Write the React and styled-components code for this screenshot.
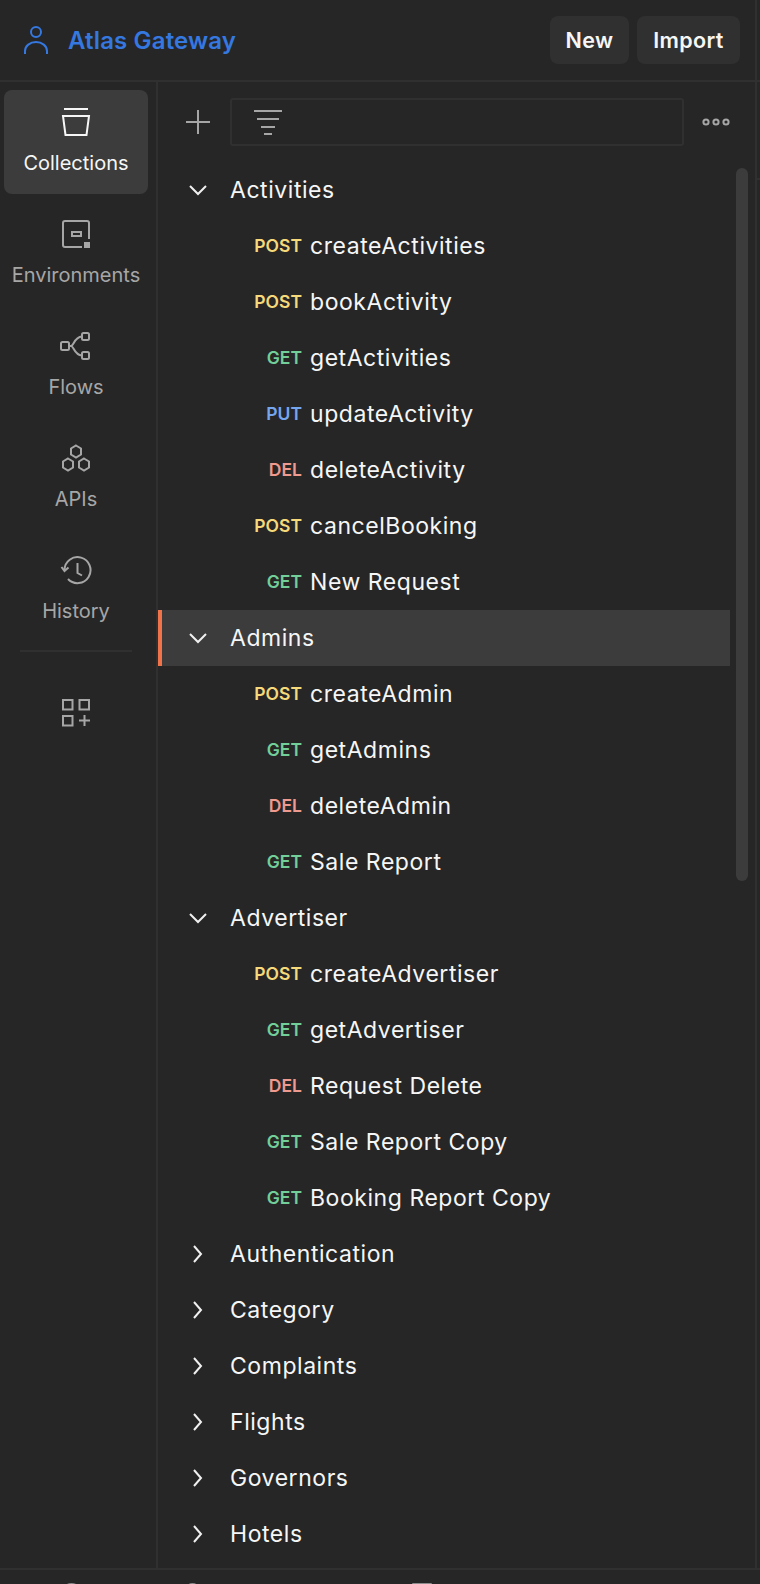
import React from "react";
import styled, { createGlobalStyle } from "styled-components";

const Global = createGlobalStyle`
  html, body { margin: 0; padding: 0; background: #262626; }
  body { font-family: Inter, "Liberation Sans", sans-serif; -webkit-font-smoothing: antialiased; }
`;

const Page = styled.div`
  position: relative;
  width: 760px;
  height: 1584px;
  overflow: hidden;
  background: #262626;
  display: flex;
  flex-direction: column;
`;

const Header = styled.header`
  height: 82px;
  flex: none;
  box-sizing: border-box;
  border-bottom: 2px solid #303030;
  padding: 16px 20px 0 24px;
  display: flex;
  justify-content: space-between;
  align-items: flex-start;
`;

const Workspace = styled.div`
  display: flex;
  align-items: center;
  gap: 20px;
  height: 48px;
`;

const WorkspaceName = styled.span`
  color: #3478e0;
  font-size: 24px;
  font-weight: 600;
  letter-spacing: 0.15px;
`;

const Actions = styled.div`
  display: flex;
  gap: 8px;
`;

const HeaderButton = styled.button`
  height: 48px;
  width: ${(p) => p.$width}px;
  border: 0;
  padding: 0;
  border-radius: 8px;
  background: #303030;
  color: #f6f6f6;
  font: 600 21.5px Inter, sans-serif;
  letter-spacing: 0.4px;
`;

const Body = styled.div`
  height: 1488px;
  flex: none;
  display: flex;
  border-bottom: 2px solid #303030;
  box-sizing: border-box;
`;

const Rail = styled.nav`
  width: 158px;
  flex: none;
  box-sizing: border-box;
  border-right: 2px solid #303030;
  padding: 8px 8px 0 4px;
  display: flex;
  flex-direction: column;
  align-items: stretch;
`;

const RailItem = styled.div`
  height: 104px;
  margin-bottom: 8px;
  border-radius: 8px;
  background: ${(p) => (p.$active ? "#3c3c3c" : "transparent")};
  color: ${(p) => (p.$active ? "#f6f6f6" : "#a6a6a6")};
  display: flex;
  flex-direction: column;
  align-items: center;
  padding-top: 16px;
  box-sizing: border-box;
  font-size: 20px;
  line-height: 28px;
  gap: 11px;
  white-space: nowrap;
`;

const RailIcon = styled.svg`
  width: 32px;
  height: 32px;
  fill: none;
  stroke: currentColor;
  stroke-width: 2;
  flex: none;
`;

const RailDivider = styled.div`
  height: 2px;
  background: #303030;
  margin: 0 16px 44px;
`;

const AddWrap = styled.div`
  display: flex;
  justify-content: center;
  color: #a6a6a6;
`;

const Panel = styled.main`
  flex: 1;
  position: relative;
  min-width: 0;
`;

const Toolbar = styled.div`
  height: 80px;
  box-sizing: border-box;
  padding: 16px 0 0 24px;
  display: flex;
  align-items: flex-start;
`;

const ToolIcon = styled.svg`
  width: 32px;
  height: 48px;
  flex: none;
  fill: none;
  stroke: #a6a6a6;
  stroke-width: 2;
`;

const Search = styled.div`
  width: 454px;
  height: 48px;
  box-sizing: border-box;
  margin-left: 16px;
  border: 2px solid #303030;
  border-radius: 3px;
  padding-left: 22px;
  display: flex;
  align-items: center;
`;

const More = styled.svg`
  width: 32px;
  height: 48px;
  margin-left: 16px;
  fill: none;
  stroke: #a6a6a6;
  stroke-width: 2;
`;

const Tree = styled.div`
  width: 572px;
`;

const FolderRow = styled.div`
  height: 56px;
  box-sizing: border-box;
  display: flex;
  align-items: center;
  padding-left: ${(p) => (p.$selected ? 26 : 30)}px;
  border-left: ${(p) => (p.$selected ? "4px solid #f0734a" : "0")};
  background: ${(p) => (p.$selected ? "#3c3c3c" : "transparent")};
  color: #f6f6f6;
  font-size: 23px;
  letter-spacing: 0.55px;
  gap: 22px;
`;

const Chevron = styled.svg`
  width: 20px;
  height: 20px;
  flex: none;
  fill: none;
  stroke: #f0f0f0;
  stroke-width: 2;
`;

const RequestRow = styled.div`
  height: 56px;
  display: flex;
  align-items: center;
  color: #f6f6f6;
  font-size: 23px;
  letter-spacing: 0.55px;
`;

const Method = styled.span`
  width: 144px;
  flex: none;
  text-align: right;
  margin-right: 8px;
  padding-bottom: 2px;
  font-size: 17.5px;
  font-weight: 600;
  letter-spacing: 0;
  color: ${(p) => p.$color};
`;

const Thumb = styled.div`
  position: absolute;
  left: 578px;
  top: 86px;
  width: 12px;
  height: 713px;
  border-radius: 6px;
  background: #3c3c3c;
`;

const RightEdge = styled.div`
  position: absolute;
  left: 755px;
  top: 0;
  height: 1568px;
  width: 2px;
  background: #303030;
`;

const EdgeTick = styled.div`
  position: absolute;
  left: 757px;
  top: 178px;
  width: 3px;
  height: 2px;
  background: #303030;
`;

const FooterPeek = styled.div`
  flex: 1;
  position: relative;
`;

const PeekIcon = styled.span`
  position: absolute;
  top: 13px;
  left: ${(p) => p.$left}px;
  width: ${(p) => p.$size}px;
  height: 6px;
  border-radius: ${(p) => (p.$square ? "1px 1px 0 0" : "50% 50% 0 0")};
  background: #8c8c8c;
`;

const COLORS = { POST: "#f5d97a", GET: "#72cf9a", PUT: "#74a6f0", DEL: "#ee9a8e" };

const tree = [
  { name: "Activities", open: true, items: [["POST", "createActivities"], ["POST", "bookActivity"], ["GET", "getActivities"], ["PUT", "updateActivity"], ["DEL", "deleteActivity"], ["POST", "cancelBooking"], ["GET", "New Request"]] },
  { name: "Admins", open: true, selected: true, items: [["POST", "createAdmin"], ["GET", "getAdmins"], ["DEL", "deleteAdmin"], ["GET", "Sale Report"]] },
  { name: "Advertiser", open: true, items: [["POST", "createAdvertiser"], ["GET", "getAdvertiser"], ["DEL", "Request Delete"], ["GET", "Sale Report Copy"], ["GET", "Booking Report Copy"]] },
  { name: "Authentication" },
  { name: "Category" },
  { name: "Complaints" },
  { name: "Flights" },
  { name: "Governors" },
  { name: "Hotels" },
];

const rail = [
  { label: "Collections", active: true, icon: <><path d="M4 3H28" /><path d="M3 10H29L26.5 29H5.5Z" /></> },
  { label: "Environments", icon: <><path d="M22 29H5a2 2 0 0 1-2-2V5a2 2 0 0 1 2-2h22a2 2 0 0 1 2 2v16" /><rect x="12" y="14" width="9" height="4" /><rect x="24" y="24" width="6" height="6" fill="currentColor" stroke="none" /></> },
  { label: "Flows", icon: <><rect x="1" y="12" width="8" height="8" rx="1.5" /><rect x="22" y="3" width="7" height="7" rx="1.5" /><rect x="22" y="22" width="7" height="7" rx="1.5" /><path d="M9 16h2c3 0 3-9 11-9.5M11 16c3 0 3 9 11 9.5" /></> },
  { label: "APIs", icon: <><path d="M16 3.5l5 3v6l-5 3-5-3v-6z" /><path d="M8 16.5l5 3v6l-5 3-5-3v-6z" /><path d="M24 16.5l5 3v6l-5 3-5-3v-6z" /></> },
  { label: "History", icon: <><path d="M4.5 16A13 13 0 1 1 8 25" /><path d="M1.5 13L4.5 17L8.5 13.5" /><path d="M17.5 9V19L22 21.5" /></> },
];

function Folder({ open }) {
  return (
    <Chevron viewBox="0 0 20 20">
      {open ? <path d="M2 6l8 8 8-8" /> : <path d="M6 2l7 8-7 8" />}
    </Chevron>
  );
}

export default function App() {
  return (
    <Page>
      <Global />
      <Header>
        <Workspace>
          <svg width="24" height="28" viewBox="0 0 24 28" fill="none" stroke="#3478e0" strokeWidth="2">
            <circle cx="12" cy="6" r="5" />
            <path d="M1 28v-3c0-5 5-9 11-9s11 4 11 9v3" />
          </svg>
          <WorkspaceName>Atlas Gateway</WorkspaceName>
        </Workspace>
        <Actions>
          <HeaderButton $width={79}>New</HeaderButton>
          <HeaderButton $width={103}>Import</HeaderButton>
        </Actions>
      </Header>
      <Body>
        <Rail>
          {rail.map((r) => (
            <RailItem key={r.label} $active={r.active}>
              <RailIcon viewBox="0 0 32 32">{r.icon}</RailIcon>
              {r.label}
            </RailItem>
          ))}
          <RailDivider />
          <AddWrap>
            <RailIcon viewBox="0 0 32 32">
              <rect x="3" y="4" width="9.5" height="9.5" />
              <rect x="19.5" y="4" width="9.5" height="9.5" />
              <rect x="3" y="20" width="9.5" height="9.5" />
              <path d="M24.5 19v11M19 24.5h11" />
            </RailIcon>
          </AddWrap>
        </Rail>
        <Panel>
          <Toolbar>
            <ToolIcon viewBox="0 0 32 48"><path d="M16 12v24M4 24h24" /></ToolIcon>
            <Search>
              <svg width="28" height="28" viewBox="0 0 28 28" fill="none" stroke="#a6a6a6" strokeWidth="2">
                <path d="M0 3h28M3 11h22M7 19h14M10 26h8" />
              </svg>
            </Search>
            <More viewBox="0 0 32 48">
              <circle cx="6" cy="24" r="2.6" />
              <circle cx="16" cy="24" r="2.6" />
              <circle cx="26" cy="24" r="2.6" />
            </More>
          </Toolbar>
          <Tree>
            {tree.map((f) => (
              <React.Fragment key={f.name}>
                <FolderRow $selected={f.selected}>
                  <Folder open={f.open} />
                  {f.name}
                </FolderRow>
                {(f.items || []).map(([m, n]) => (
                  <RequestRow key={n}>
                    <Method $color={COLORS[m]}>{m}</Method>
                    {n}
                  </RequestRow>
                ))}
              </React.Fragment>
            ))}
          </Tree>
          <Thumb />
        </Panel>
      </Body>
      <FooterPeek>
        <PeekIcon $left={65} $size={13} />
        <PeekIcon $left={188} $size={9} />
        <PeekIcon $left={412} $size={20} $square />
      </FooterPeek>
      <RightEdge />
      <EdgeTick />
    </Page>
  );
}
